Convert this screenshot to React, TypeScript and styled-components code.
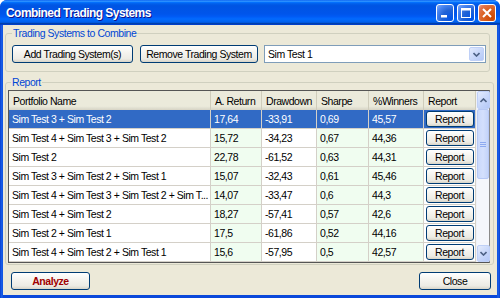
import React from "react";
import styled, { createGlobalStyle } from "styled-components";

const GlobalStyle = createGlobalStyle`
  html, body {
    margin: 0;
    padding: 0;
    background: #ffffff;
  }
  body {
    font-family: "Liberation Sans", Arial, sans-serif;
    font-size: 10.5px;
    letter-spacing: -0.45px;
    color: #000;
  }
  * {
    box-sizing: border-box;
  }
`;

const Window = styled.div`
  width: 500px;
  height: 298px;
  display: flex;
  flex-direction: column;
  background: linear-gradient(90deg, #0a3fd0 0px, #1a64ec 2px, #0a48da 3px, #0a48da 497px, #1a64ec 498px, #0a3fd0 500px);
  border-radius: 7px 7px 0 0;
  overflow: hidden;
`;

const TitleBar = styled.div`
  height: 25px;
  flex: none;
  display: flex;
  align-items: center;
  justify-content: space-between;
  padding: 0 3px 0 6px;
  background: linear-gradient(
    180deg,
    #0058ee 0%,
    #3593ff 4%,
    #288eff 6%,
    #127dff 8%,
    #036ffc 10%,
    #0262ee 14%,
    #0057e5 20%,
    #0054e3 24%,
    #0055eb 56%,
    #005bf5 66%,
    #026afe 76%,
    #0062ef 86%,
    #0052d6 92%,
    #0040ab 94%,
    #003dd7 100%
  );
`;

const Title = styled.span`
  color: #ffffff;
  font-weight: bold;
  font-size: 12px;
  letter-spacing: -0.55px;
  text-shadow: 1px 1px #0f1089;
`;

const Controls = styled.div`
  display: flex;
  gap: 3px;
  margin-right: 1px;
`;

const CtrlButton = styled.div<{ $close?: boolean }>`
  width: 18px;
  height: 18px;
  border: 1px solid #ffffff;
  border-radius: 3px;
  display: flex;
  align-items: center;
  justify-content: center;
  background: ${(p) =>
    p.$close
      ? "radial-gradient(circle at 80% 80%, #cc4600 0%, #dc6527 55%, #e07550 80%, #f2a88d 100%)"
      : "radial-gradient(circle at 85% 85%, #0054e9 0%, #2263d5 45%, #4a86f2 75%, #86acf8 100%)"};
`;

const Body = styled.div`
  flex: 1;
  margin: 0 3px 3px;
  background: #ece9d8;
  display: flex;
  flex-direction: column;
  padding: 2px 3px 5px 2px;
`;

const Group = styled.fieldset<{ $pad: string; $right?: number; $top?: number }>`
  margin: ${(p) => p.$top ?? 0}px ${(p) => p.$right ?? 0}px 0 0;
  border: 1px solid #d0d0bf;
  border-radius: 3px;
  padding: ${(p) => p.$pad};
  min-width: 0;
`;

const Legend = styled.legend<{ $offset: number }>`
  color: #0046d5;
  line-height: 12px;
  padding: 0 1px;
  margin-left: ${(p) => p.$offset}px;
`;

const ToolRow = styled.div`
  display: flex;
  align-items: center;
  gap: 7px;
`;

const XpButton = styled.button<{ $w: number; $h?: number; $accent?: boolean }>`
  width: ${(p) => p.$w}px;
  height: ${(p) => p.$h ?? 18}px;
  flex: none;
  padding: 0;
  border: 1px solid #003c74;
  border-radius: 3px;
  background: linear-gradient(180deg, #ffffff 0%, #f5f4ef 40%, #ecebe4 80%, #d8d4c8 100%);
  font-family: inherit;
  font-size: 10.5px;
  letter-spacing: -0.45px;
  font-weight: ${(p) => (p.$accent ? "bold" : "normal")};
  color: ${(p) => (p.$accent ? "#a00000" : "#000000")};
  line-height: 1;
  display: flex;
  align-items: center;
  justify-content: center;
`;

const Combo = styled.div`
  flex: 1;
  height: 18px;
  margin-left: -1px;
  border: 1px solid #7f9db9;
  background: #ffffff;
  display: flex;
  align-items: center;
  justify-content: space-between;
  padding: 0 1px 0 3px;
`;

const ArrowBox = styled.div<{ $h?: number }>`
  width: ${(p) => (p.$h ? 13 : 15)}px;
  height: ${(p) => p.$h ?? 14}px;
  flex: none;
  border: 1px solid #bfd0f7;
  border-radius: 2px;
  background: linear-gradient(135deg, #e3ebfd 0%, #c9d8fa 50%, #b4c8f7 100%);
  display: flex;
  align-items: center;
  justify-content: center;
`;

const TableFrame = styled.div`
  height: 173px;
  display: flex;
  border: 1px solid #555555;
  border-right-color: #8a8a8a;
  background: #ffffff;
`;

const Grid = styled.div`
  flex: 1;
  display: grid;
  grid-template-columns: 202px 51px 55px 52px 55px 52px;
  grid-auto-rows: 19px;
`;

const HeadCell = styled.div`
  background: linear-gradient(180deg, #ebeadb 0%, #ebeadb 80%, #e2e1d3 88%, #d6d3c4 100%);
  border-right: 1px solid #cfccbb;
  display: flex;
  align-items: center;
  padding-left: 4px;
  white-space: nowrap;
`;

const Cell = styled.div<{ $sel?: boolean; $green?: boolean; $btn?: boolean }>`
  background: ${(p) => (p.$sel ? "#316ac5" : p.$green ? "#f0fdf0" : "#ffffff")};
  color: ${(p) => (p.$sel ? "#ffffff" : "#000000")};
  border-right: 1px solid #d4d0c8;
  border-bottom: 1px solid #d4d0c8;
  display: flex;
  align-items: center;
  justify-content: ${(p) => (p.$btn ? "center" : "flex-start")};
  padding-left: ${(p) => (p.$btn ? 0 : 3)}px;
  white-space: nowrap;
  overflow: hidden;
`;

const Scrollbar = styled.div`
  width: 13px;
  flex: none;
  display: flex;
  flex-direction: column;
  background: #f4f6fc;
  border-left: 1px solid #eef1f8;
`;

const Track = styled.div`
  flex: 1;
  display: flex;
  flex-direction: column;
`;

const Thumb = styled.div`
  height: 70px;
  border: 1px solid #b7c9f5;
  border-radius: 2px;
  background: linear-gradient(90deg, #c9d8fb 0%, #d4e0fc 50%, #c4d4f9 100%);
  display: flex;
  flex-direction: column;
  align-items: center;
  justify-content: center;
  gap: 1px;
`;

const Grip = styled.div`
  width: 6px;
  height: 1px;
  background: #eef3fe;
  border-bottom: 1px solid #8eaaf0;
`;

const Footer = styled.div`
  margin-top: 7px;
  display: flex;
  justify-content: space-between;
  padding: 0 3px 0 6px;
`;

const Chevron = ({ up }: { up?: boolean }) => (
  <svg width="7" height="5" viewBox="0 0 7 5">
    <path
      d={up ? "M0.5 4 L3.5 1 L6.5 4" : "M0.5 1 L3.5 4 L6.5 1"}
      fill="none"
      stroke="#4d6185"
      strokeWidth="1.6"
    />
  </svg>
);

type Row = [string, string, string, string, string];

const rows: Row[] = [
  ["Sim Test 3 + Sim Test 2", "17,64", "-33,91", "0,69", "45,57"],
  ["Sim Test 4 + Sim Test 3 + Sim Test 2", "15,72", "-34,23", "0,67", "44,36"],
  ["Sim Test 2", "22,78", "-61,52", "0,63", "44,31"],
  ["Sim Test 3 + Sim Test 2 + Sim Test 1", "15,07", "-32,43", "0,61", "45,46"],
  ["Sim Test 4 + Sim Test 3 + Sim Test 2 + Sim T...", "14,07", "-33,47", "0,6", "44,3"],
  ["Sim Test 4 + Sim Test 2", "18,27", "-57,41", "0,57", "42,6"],
  ["Sim Test 2 + Sim Test 1", "17,5", "-61,86", "0,52", "44,16"],
  ["Sim Test 4 + Sim Test 2 + Sim Test 1", "15,6", "-57,95", "0,5", "42,57"],
];

const headers = ["Portfolio Name", "A. Return", "Drawdown", "Sharpe", "%Winners", "Report"];
const greenCols = [false, true, false, true, true];

export default function App() {
  return (
    <>
      <GlobalStyle />
      <Window>
        <TitleBar>
          <Title>Combined Trading Systems</Title>
          <Controls>
            <CtrlButton>
              <svg width="16" height="16" viewBox="0 0 16 16">
                <rect x="4" y="10" width="6" height="2.5" fill="#fff" />
              </svg>
            </CtrlButton>
            <CtrlButton>
              <svg width="16" height="16" viewBox="0 0 16 16">
                <rect x="3.5" y="3.5" width="9" height="9" fill="none" stroke="#fff" strokeWidth="1" />
                <rect x="3.5" y="3.5" width="9" height="2" fill="#fff" />
              </svg>
            </CtrlButton>
            <CtrlButton $close>
              <svg width="16" height="16" viewBox="0 0 16 16">
                <path d="M4 4 L12 12 M12 4 L4 12" stroke="#fff" strokeWidth="2" />
              </svg>
            </CtrlButton>
          </Controls>
        </TitleBar>
        <Body>
          <Group $pad="6px 3px 8px 6px" $right={4}>
            <Legend $offset={0}>Trading Systems to Combine</Legend>
            <ToolRow>
              <XpButton $w={121}>Add Trading System(s)</XpButton>
              <XpButton $w={118}>Remove Trading System</XpButton>
              <Combo>
                <span>Sim Test 1</span>
                <ArrowBox>
                  <Chevron />
                </ArrowBox>
              </Combo>
            </ToolRow>
          </Group>
          <Group $pad="2px 3px 1px 2px" $top={4}>
            <Legend $offset={3}>Report</Legend>
            <TableFrame>
              <Grid>
                {headers.map((h) => (
                  <HeadCell key={h}>{h}</HeadCell>
                ))}
                {rows.map((r, i) => (
                  <React.Fragment key={i}>
                    {r.map((v, j) => (
                      <Cell key={j} $sel={i === 0} $green={greenCols[j]}>
                        {v}
                      </Cell>
                    ))}
                    <Cell $sel={i === 0} $btn>
                      <XpButton $w={48} $h={16}>
                        Report
                      </XpButton>
                    </Cell>
                  </React.Fragment>
                ))}
              </Grid>
              <Scrollbar>
                <ArrowBox $h={18}>
                  <Chevron up />
                </ArrowBox>
                <Track>
                  <Thumb>
                    <Grip />
                    <Grip />
                    <Grip />
                  </Thumb>
                </Track>
                <ArrowBox $h={17}>
                  <Chevron />
                </ArrowBox>
              </Scrollbar>
            </TableFrame>
          </Group>
          <Footer>
            <XpButton $w={79} $accent>
              Analyze
            </XpButton>
            <XpButton $w={72}>Close</XpButton>
          </Footer>
        </Body>
      </Window>
    </>
  );
}
